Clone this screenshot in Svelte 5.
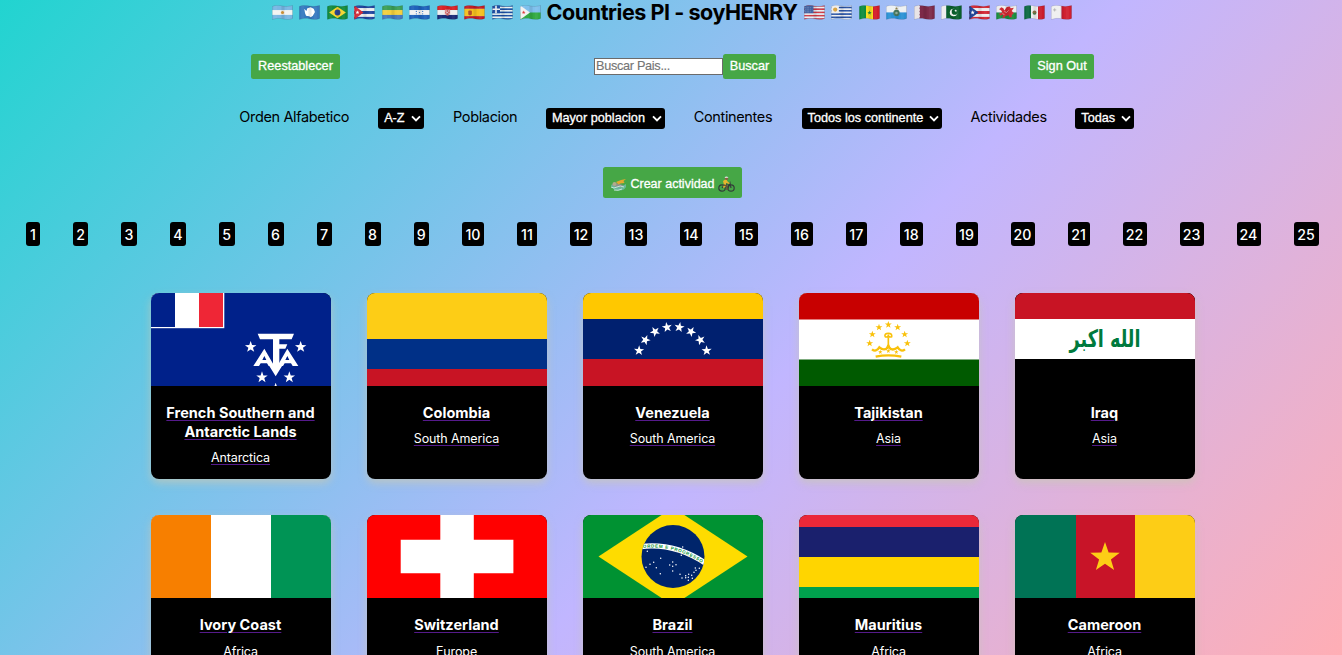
<script>
  const star = (cx, cy, r) =>
    Array.from({ length: 10 }, (_, i) => {
      const a = (Math.PI / 5) * i - Math.PI / 2;
      const q = i % 2 ? r * 0.4 : r;
      return `${(cx + q * Math.cos(a)).toFixed(2)},${(cy + q * Math.sin(a)).toFixed(2)}`;
    }).join(' ');

  const left = ['ar', 'aq', 'br', 'cu', 'ga', 'hn', 'hr', 'es', 'gr', 'dj'];
  const right = ['us', 'uy', 'sn', 'sm', 'qa', 'pk', 'pr', 'wales', 'mx', 'mt'];

  // Stripes: h = horizontal bands, v = vertical bands, as [colour, share]
  const bands = {
    ar: ['h', [['#79b7e3', 1], ['#f3f3f1', 1], ['#79b7e3', 1]]],
    aq: ['h', [['#3679bf', 1]]],
    br: ['h', [['#138a3d', 1]]],
    cu: ['h', [['#23469f', 1], ['#eee', 1], ['#23469f', 1], ['#eee', 1], ['#23469f', 1]]],
    ga: ['h', [['#3c9f57', 1], ['#f5cf3e', 1], ['#4679bd', 1]]],
    hn: ['h', [['#1f62bb', 1], ['#f2f2f2', 1], ['#1f62bb', 1]]],
    hr: ['h', [['#d92226', 1], ['#efefef', 1], ['#1b2a76', 1]]],
    es: ['h', [['#c41c24', 1], ['#f5c01f', 2], ['#c41c24', 1]]],
    gr: ['h', Array.from({ length: 9 }, (_, i) => [i % 2 ? '#eee' : '#1d4da0', 1])],
    dj: ['h', [['#7fc0ed', 1], ['#33aa42', 1]]],
    us: ['h', Array.from({ length: 9 }, (_, i) => [i % 2 ? '#eee' : '#d23a43', 1])],
    uy: ['h', Array.from({ length: 9 }, (_, i) => [i % 2 ? '#264f9f' : '#eee', 1])],
    sn: ['v', [['#0b8c3e', 1], ['#f6df22', 1], ['#d31c29', 1]]],
    sm: ['h', [['#eef1f3', 1], ['#2b92d4', 1]]],
    qa: ['v', [['#e8e3e5', 1], ['#7d2a49', 3]]],
    pk: ['v', [['#eee', 1], ['#0b602d', 3]]],
    pr: ['h', [['#d22934', 1], ['#eee', 1], ['#d22934', 1], ['#eee', 1], ['#d22934', 1]]],
    wales: ['h', [['#eee', 1], ['#1b8d3d', 1]]],
    mx: ['v', [['#0c6942', 1], ['#eee', 1], ['#ca1c2a', 1]]],
    mt: ['v', [['#f0f0f0', 1], ['#d02030', 1]]]
  };
  const rects = (code) => {
    const [dir, list] = bands[code];
    const total = list.reduce((s, b) => s + b[1], 0);
    const size = dir === 'h' ? 14 : 20;
    let p = 0;
    return list.map(([fill, n]) => {
      const d = (n / total) * size;
      const r = dir === 'h' ? { x: 0, y: p, width: 20, height: d, fill } : { x: p, y: 0, width: d, height: 14, fill };
      p += d;
      return r;
    });
  };

  const filters = [
    { label: 'Orden Alfabetico', lw: 110, value: 'A-Z', w: 46 },
    { label: 'Poblacion', lw: 64, value: 'Mayor poblacion', w: 119 },
    { label: 'Continentes', lw: 79, value: 'Todos los continente', w: 140 },
    { label: 'Actividades', lw: 76, value: 'Todas', w: 59 }
  ];

  const pages = [14, 15, 16, 16, 15.5, 16, 15, 16, 15.5, 22, 20, 22, 22, 22, 22.5, 22, 21.5, 22.5, 22, 24, 22, 24, 24, 24, 25];

  const rows = [
    [
      ['tf', 'French Southern and Antarctic Lands', 'Antarctica'],
      ['co', 'Colombia', 'South America'],
      ['ve', 'Venezuela', 'South America'],
      ['tj', 'Tajikistan', 'Asia'],
      ['iq', 'Iraq', 'Asia']
    ],
    [
      ['ci', 'Ivory Coast', 'Africa'],
      ['ch', 'Switzerland', 'Europe'],
      ['brazil', 'Brazil', 'South America'],
      ['mu', 'Mauritius', 'Africa'],
      ['cm', 'Cameroon', 'Africa']
    ]
  ];
  const boxes = { ch: '0 0 180 180', brazil: '0 0 180 126' };
  const veStars = [[192, 197], [211, 165], [240, 140], [276, 127], [313, 127], [348, 140], [376, 165], [395, 197]];
  const tjStars = [[884, 175], [892, 148], [912, 127], [940, 119], [968, 127], [989, 148], [997, 175]];
  const tfStars = [[317, 186], [467, 186], [351, 277], [433, 277], [392, 311]];
  const skyDots = [[217, 139], [257, 160], [225, 178], [236, 172], [213, 187], [244, 188], [256, 206], [293, 171], [284, 180], [303, 179], [293, 184], [293, 198], [323, 126], [319, 151], [315, 208], [321, 219], [332, 212], [341, 208], [340, 217], [350, 211], [357, 202], [361, 189], [363, 196], [340, 226], [332, 218], [352, 220], [373, 190]];
</script>

{#snippet mini(code)}
  <svg class="mini" viewBox="0 0 20 14" width="21" height="15">
    <defs>
      <clipPath id={'w-' + code}>
        <path d="M0.3 1.2C4 -.6 7 0 10 .8S16.500 1.300 19.600 .2V12.600C16 14.300 13 13.700 10 13S4 12.400 .3 13.700Z" />
      </clipPath>
    </defs>
    <g clip-path={`url(#w-${code})`}>
      {#each rects(code) as r}<rect {...r} />{/each}
      {#if code === 'ar'}<circle cx="10" cy="7" r="1.500" fill="#d89b3c" />
      {:else if code === 'aq'}<path d="M5 3.500l2 2 1-2.500 3-1 3 1.500 1.200 3-2 3.500-2 1.500-1.500-1-3-.5-1-2.500z" fill="#fff" />
      {:else if code === 'br'}<path d="M10 1.500L18 7l-8 5.500L2 7z" fill="#f5d52f" /><circle cx="10" cy="7" r="2.800" fill="#2c4590" />
      {:else if code === 'cu'}<path d="M0 0l9 7-9 7z" fill="#d22c37" /><polygon points={star(3.3, 7, 2)} fill="#fff" />
      {:else if code === 'hn'}{#each [[7, 6], [7, 8.3], [10, 7.1], [13, 6], [13, 8.3]] as [x, y]}<circle cx={x} cy={y} r=".6" fill="#3d7bc6" />{/each}
      {:else if code === 'hr'}<path d="M7.500 4h5v4.500q-2.500 3-5 0z" fill="#d7696c" /><path d="M8 5.500h1.300M10.500 5.500h1.300M9 7h1.300M11 8.300h1M8 8.500h1" stroke="#eee" />
      {:else if code === 'es'}<rect x="4" y="5" width="3.500" height="4.500" rx="1" fill="#b04f2b" />
      {:else if code === 'gr'}<rect width="7.600" height="7.700" fill="#1d4da0" /><path d="M0 3.900h7.600M3.800 0v7.700" stroke="#eee" stroke-width="1.500" />
      {:else if code === 'dj'}<path d="M0 0l9.500 7L0 14z" fill="#f2f2f2" /><polygon points={star(3.5, 7, 1.9)} fill="#d33" />
      {:else if code === 'us'}<rect width="9" height="7.700" fill="#3e5f9f" /><path d="M1 2.500h7M1 4.500h7M1 6.300h7" stroke="#91a6ca" stroke-width=".6" stroke-dasharray=".8 .8" />
      {:else if code === 'uy'}<rect width="7.500" height="7.700" fill="#eee" /><circle cx="4" cy="4.200" r="2" fill="#d9a13b" />
      {:else if code === 'sn'}<polygon points={star(10, 7.2, 2.2)} fill="#1b8c41" />
      {:else if code === 'sm'}<circle cx="10" cy="7.400" r="3" fill="#4b7a60" /><circle cx="10" cy="7.400" r="1.200" fill="#9cbba8" /><path d="M8.500 4l1.500-2 1.500 2z" fill="#9b8a4e" />
      {:else if code === 'qa'}<path d="M4 0h1l.8 1.500L5 3l.8 1.500L5 6l.8 1.500L5 9l.8 1.500L5 12l.8 2H4z" fill="#e8e3e5" />
      {:else if code === 'pk'}<circle cx="12" cy="7" r="3.600" fill="#fff" /><circle cx="13.200" cy="6.200" r="3" fill="#0b602d" /><polygon points={star(14, 5.3, 1.4)} fill="#fff" />
      {:else if code === 'pr'}<path d="M0 0l9 7-9 7z" fill="#1b4194" /><polygon points={star(3.5, 7, 2.2)} fill="#fff" />
      {:else if code === 'wales'}<path d="M3 4l2-2 2 1 1 2 2-3 3-1 1 2 3-.5-2 3 2 2-2 2v2h-2l-1-2-3 1-1 1.500H6L7 9 4 10 3 8l3-1-1-2z" fill="#cf2931" /><path d="M8 6l2 1 2-2M6 8l2 1" stroke="#e6c5c5" stroke-width=".6" fill="none" />
      {:else if code === 'mx'}<circle cx="10" cy="7" r="1.900" fill="#8b7348" /><path d="M8.700 7.800q1.300 1.300 2.600 0" stroke="#3f844d" fill="none" />
      {:else if code === 'mt'}<path d="M3.500 3v3M2 4.500h3" stroke="#aaa" stroke-width=".8" />{/if}
      <path d="M2 0h3v14H2zM14 0h3v14h-3z" fill="#fff" opacity=".05" />
      <path d="M9 0h3v14H9zM19 0h1v14h-1z" fill="#000" opacity=".08" />
    </g>
    <path d="M0.3 1.2C4 -.6 7 0 10 .8S16.500 1.300 19.600 .2V12.600C16 14.300 13 13.700 10 13S4 12.400 .3 13.700Z" fill="none" stroke="#000" stroke-opacity=".16" stroke-width=".6" />
  </svg>
{/snippet}

{#snippet flag(code)}
  <svg class="flag" viewBox={boxes[code] ?? '0 0 180 120'} preserveAspectRatio="xMidYMid slice">
    {#if code === 'tf'}
      <rect width="180" height="120" fill="#00218a" />
      <rect width="73.300" height="48.700" fill="#fff" />
      <rect width="24" height="47.500" fill="#00218a" />
      <rect x="48" width="24" height="47.500" fill="#ef2636" />
      <g transform="translate(-6 5.500) scale(.33333)" fill="#fff">
        <path d="M338 146H447L440 163H403V178H427L421 191H403V240H413L392 274 371 240H384V163H345Z" />
        <path fill-rule="evenodd" d="M325 243L358 191 388 243H371L366 235H347L342 243ZM352 225H364L358 213Z" />
        <path fill-rule="evenodd" d="M460 243L427 191 397 243H414L419 235H438L443 243ZM433 225H421L427 213Z" />
        {#each tfStars as [x, y]}<polygon points={star(x, y, 18)} />{/each}
      </g>
    {:else if code === 'co'}
      <rect width="180" height="60" fill="#fdcd16" /><rect y="59.500" width="180" height="30" fill="#003087" /><rect y="89.500" width="180" height="31" fill="#c81424" />
    {:else if code === 've'}
      <rect width="180" height="40" fill="#ffc800" /><rect y="39.500" width="180" height="40" fill="#00206f" /><rect y="79.500" width="180" height="41" fill="#c81424" />
      <g transform="translate(-8 5.500) scale(.33333)" fill="#fff">
        {#each veStars as [x, y], i}<polygon transform={`rotate(${(i - 3.5) * 20} ${x} ${y})`} points={star(x, y, 16)} />{/each}
      </g>
    {:else if code === 'tj'}
      <rect width="180" height="120" fill="#fff" /><rect width="180" height="40" fill="#c80000" /><rect y="80" width="180" height="40" fill="#005a00" />
      <g transform="translate(-224 5.500) scale(.33333)" fill="#f9c10a">
        {#each tjStars as [x, y]}<polygon points={star(x, y, 11)} />{/each}
        {#each [[916, 201], [940, 198], [964, 201]] as [x, y]}<polygon points={star(x, y, 7)} />{/each}
        <g fill="none" stroke="#f9c10a" stroke-width="4">
          <path d="M902 215Q940 207 979 215" stroke-width="7" />
          <path d="M891 193Q903 203 913 187Q928 200 940 186Q952 200 968 187Q978 203 990 193" stroke-width="7" />
          <path d="M940 187V157M930 155Q928 145 940 145T950 155Q944 158 940 152Q936 158 930 155M934 192L940 178 946 192" stroke-width="5" />
        </g>
      </g>
    {:else if code === 'iq'}
      <rect width="180" height="120" fill="#000" /><rect width="180" height="39.500" fill="#c81424" /><rect y="39.500" width="180" height="40" fill="#fff" />
      <text class="takbir" x="90" y="67.500" textLength="71" lengthAdjust="spacingAndGlyphs">الله اكبر</text>
    {:else if code === 'ci'}
      <rect width="180" height="120" fill="#fff" /><rect width="60" height="120" fill="#f77f00" /><rect x="120" width="60" height="120" fill="#009455" />
    {:else if code === 'ch'}
      <rect width="180" height="180" fill="#f00" /><path d="M73.300 33.700h33.500v39.600h39.600v33.500h-39.600v39.600H73.300v-39.600H33.700V73.300h39.600z" fill="#fff" />
    {:else if code === 'brazil'}
      <defs><clipPath id="globe"><circle cx="90" cy="63" r="31.500" /></clipPath></defs>
      <rect width="180" height="126" fill="#009232" /><path d="M15.500 63L90 14l74.500 49L90 112z" fill="#fedc00" />
      <circle cx="90" cy="63" r="31.500" fill="#00256b" />
      <g clip-path="url(#globe)">
        <path d="M58 53Q92 49 123 70" fill="none" stroke="#fff" stroke-width="5.300" />
        <path id="motto-line" d="M60 54.600Q92 51 122 71.500" fill="none" />
        <text class="motto"><textPath href="#motto-line" textLength="62">ORDEM E PROGRESSO</textPath></text>
      </g>
      {#each skyDots as [x, y]}<circle cx={x / 3 - 8} cy={y / 3 + 11.5} r=".75" fill="#fff" />{/each}
    {:else if code === 'mu'}
      <rect width="180" height="31" fill="#ea2839" /><rect y="30.500" width="180" height="30" fill="#1a206d" /><rect y="60.500" width="180" height="30" fill="#ffd500" /><rect y="90.500" width="180" height="30" fill="#00a04d" />
    {:else}
      <rect width="61" height="120" fill="#007355" /><rect x="61" width="60" height="120" fill="#c81428" /><rect x="120" width="60" height="120" fill="#fdcd16" />
      <polygon points={star(90, 61, 15.5)} fill="#fdcd16" />
    {/if}
  </svg>
{/snippet}

<main>
  <header>
    <span class="strip">{#each left as c}{@render mini(c)}{/each}</span>
    <h1>Countries PI - soyHENRY</h1>
    <span class="strip">{#each right as c}{@render mini(c)}{/each}</span>
  </header>

  <nav class="tools">
    <button class="reset">Reestablecer</button>
    <form><input placeholder="Buscar Pais..." /><button type="button" class="find">Buscar</button></form>
    <button class="out">Sign Out</button>
  </nav>

  <div class="filters">
    {#each filters as f}
      <span class="label" style:width={f.lw + 'px'}>{f.label}</span>
      <button class="select" style:width={f.w + 'px'}>
        <span>{f.value}</span>
        <svg width="10" height="7" viewBox="0 0 10 7"><path d="M1 1.300l4 4 4-4" fill="none" stroke="#fff" stroke-width="1.900" /></svg>
      </button>
    {/each}
  </div>

  <div class="create">
    <button>
      <svg width="17" height="15" viewBox="0 0 17 15">
        <path d="M1 8q3-2 7 0t8-1v3q-2 4-8 3.500Q2 13 1 8z" fill="#68b79a" />
        <path d="M2 8q3-3 7-1l4 1-1 2q-5 1-8-1z" fill="#8b9290" />
        <circle cx="4.500" cy="7" r="2" fill="#b2aa8c" />
        <path d="M6 5l5-2 5-1-2.500 2 1 2-4 .5-2 1z" fill="#e4a72f" />
        <path d="M1 10q3 2 6 0t7 0M4 13q4 1 8-1" stroke="#c5e4d8" fill="none" />
      </svg>
      <span>Crear actividad</span>
      <svg width="17" height="17" viewBox="0 0 17 17">
        <g fill="none" stroke="#333d39" stroke-width="1.200"><circle cx="4" cy="12" r="3.200" /><circle cx="13" cy="12" r="3.200" /><path d="M4 12l3-4 3 4 2-5 1 5M7 8h5" /></g>
        <path d="M5 5l3-2 2 3 2 1-1 1-3-1v3l-2 2-1-1 1-2z" fill="#e7b52d" />
        <path d="M6 9l3 1v4" stroke="#6e5139" stroke-width="1.500" fill="none" />
        <circle cx="8.500" cy="2.500" r="1.600" fill="#8d6043" /><path d="M6.500 2q1-2 3-1.200l1 1z" fill="#dfe3e3" />
      </svg>
    </button>
  </div>

  <ul class="pages">
    {#each pages as w, i}<li style:width={w + 'px'}>{i + 1}</li>{/each}
  </ul>

  <section class="grid">
    {#each rows as row, i}
      {#each row as [code, name, region]}
        <a class="card" class:short={i === 1} href="#top">
          {@render flag(code)}
          <h2>{name}</h2>
          <p>{region}</p>
        </a>
      {/each}
    {/each}
  </section>
</main>

<style>
  :global(body) { margin: 0; overflow: hidden; }
  main {
    height: 655px;
    overflow: hidden;
    box-sizing: border-box;
    background: linear-gradient(132deg, #21d4d0 0%, #c1b6ff 58%, #ffaeb5 100%);
    font-family: Inter, "Liberation Sans", sans-serif;
    color: #000;
  }
  button, input { font-family: "Liberation Sans", Arial, sans-serif; font-size: 12.700px; border: 0; margin: 0; }
  button { background: #46a746; color: #fff; border-radius: 2.500px; height: 25px; padding: 0; line-height: 22px; padding-bottom: 2px; white-space: nowrap; -webkit-text-stroke: .3px #fff; }
  header { display: flex; align-items: center; justify-content: center; height: 24px; gap: 6px; padding-left: 2px; }
  h1 { margin: 0; width: 251px; text-align: center; font-size: 21.500px; line-height: 24px; letter-spacing: -.45px; font-weight: 700; white-space: nowrap; }
  .strip { display: flex; gap: 6.550px; }
  .mini { display: block; flex: none; }
  .tools { display: flex; gap: 254px; padding: 30px 0 0 251px; }
  .tools form { display: flex; align-items: center; margin: 0; }
  .tools input { box-sizing: border-box; width: 129px; height: 17px; border: 1px solid #6b6b6b; padding: 0 1px 1px; background: #fff; font-size: 12.700px; letter-spacing: -.3px; -webkit-text-stroke: .15px #757575; }
  input::placeholder { color: #757575; opacity: 1; }
  .reset { width: 89px; }
  .find { width: 53px; }
  .out { width: 64px; }
  .filters { display: flex; align-items: center; gap: 28.860px; padding: 29px 0 0 239.300px; height: 21px; }
  .label { font-size: 14.500px; line-height: 18px; white-space: nowrap; padding-bottom: 3px; letter-spacing: -.36px; flex: none; }
  .select { flex: none; display: flex; align-items: center; justify-content: space-between; height: 21px; line-height: 19px; background: #000; border-radius: 3px; padding: 0 3px 0 6px; font-size: 12.700px; }
  .select span { padding-bottom: 1px; }
  .create { display: flex; justify-content: center; padding: 38px 0 0 3px; }
  .create button { display: flex; align-items: center; justify-content: center; gap: 3px; width: 139px; height: 31px; padding: 3px 0 0; font-size: 12.500px; }
  .pages { display: flex; gap: 33px; list-style: none; margin: 24px 0 0; padding: 0 0 0 26px; }
  .pages li { flex: none; height: 24px; line-height: 25px; border-radius: 3px; background: #000; color: #fff; text-align: center; font-size: 14.200px; font-weight: 500; }
  .grid { display: grid; grid-template-columns: repeat(5, 180px); grid-auto-rows: 186px; gap: 36px; padding: 47px 0 0 151px; }
  .card { background: #000; color: #fff; border-radius: 8px; overflow: hidden; text-align: center; text-decoration: none; box-shadow: 0 4px 8px rgba(200, 200, 180, .7); }
  .flag { display: block; width: 180px; height: 93px; }
  .short .flag { height: 83px; }
  .card h2 { margin: 17px 11px 0 10px; font-size: 14.500px; line-height: 19px; letter-spacing: .02px; font-weight: 700; text-decoration: underline #551a8b 1px; text-underline-offset: 2px; }
  .card p { margin: 9px 1px 0 0; font-size: 12.500px; line-height: 15px; letter-spacing: -.12px; text-decoration: underline #551a8b 1px; text-underline-offset: 2px; }
  .card.short p { margin-top: 10px; }
  .takbir { font: bold 24px "DejaVu Sans", sans-serif; fill: #007a3d; text-anchor: middle; }
  .motto { font: bold 4.500px "Liberation Sans", sans-serif; fill: #009232; }
</style>
